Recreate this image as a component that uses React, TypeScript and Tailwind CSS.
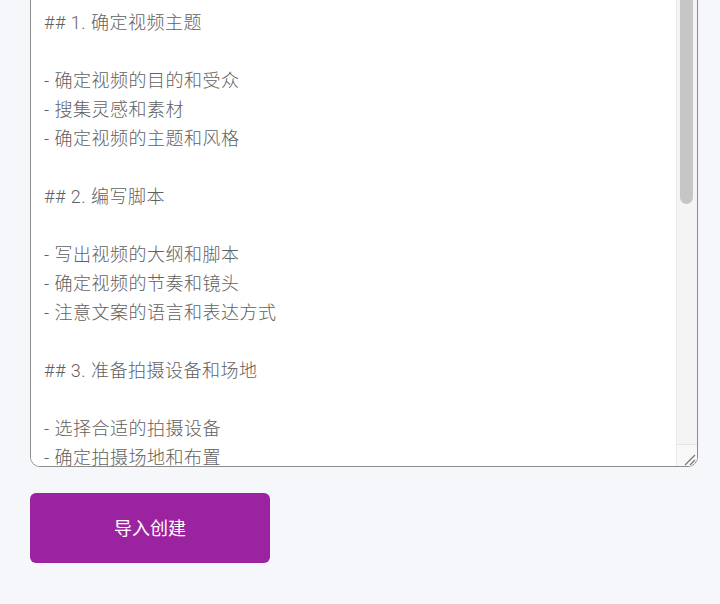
const outline = [
  '# 短视频制作流程',
  '',
  '## 1. 确定视频主题',
  '',
  '- 确定视频的目的和受众',
  '- 搜集灵感和素材',
  '- 确定视频的主题和风格',
  '',
  '## 2. 编写脚本',
  '',
  '- 写出视频的大纲和脚本',
  '- 确定视频的节奏和镜头',
  '- 注意文案的语言和表达方式',
  '',
  '## 3. 准备拍摄设备和场地',
  '',
  '- 选择合适的拍摄设备',
  '- 确定拍摄场地和布置',
  '- 准备好道具和服装',
  '',
  '## 4. 拍摄视频',
  '',
  '- 按照脚本进行拍摄',
  '- 注意光线和声音',
  '- 多拍几条备用素材',
].join('\n');

function Resizer() {
  return (
    <svg width="20" height="21" viewBox="0 0 20 21" className="block">
      <path d="M8 20 L18 10 M13 20 L18 15" stroke="#7a7a7a" strokeWidth="1.3" fill="none" />
    </svg>
  );
}

export default function App() {
  return (
    <div
      className="h-[604px] overflow-hidden bg-[#f6f7fb]"
      style={{ fontFamily: 'Roboto, "Noto Sans CJK SC", sans-serif' }}
    >
      {/* editor, scrolled past its header */}
      <div className="-mt-[63px] ml-[30px] flex h-[530px] w-[668px] overflow-hidden rounded-[10px] border border-[#8c8c8c] bg-white">
        <textarea
          readOnly
          defaultValue={outline}
          className="min-w-0 flex-1 resize-none overflow-hidden bg-white px-[13px] py-[12px] text-[18px] font-light leading-[29px] tracking-[0.5px] text-[#616161] outline-none"
        />
        <div className="flex w-[21px] flex-col border-l border-[#ebebeb] bg-[#f4f4f4]">
          <div className="flex-1 pl-[3px] pr-[4px] pt-[4px]">
            <div className="h-[262px] rounded-full bg-[#c6c6c6]" />
          </div>
          <div className="h-[22px] border-t border-[#e4e4e4] bg-[#f8f8f8]">
            <Resizer />
          </div>
        </div>
      </div>

      <button className="ml-[30px] mt-[26px] flex h-[70px] w-[240px] items-center justify-center rounded-md bg-[#9c23a0] text-[18px] text-white">
        导入创建
      </button>
    </div>
  );
}
